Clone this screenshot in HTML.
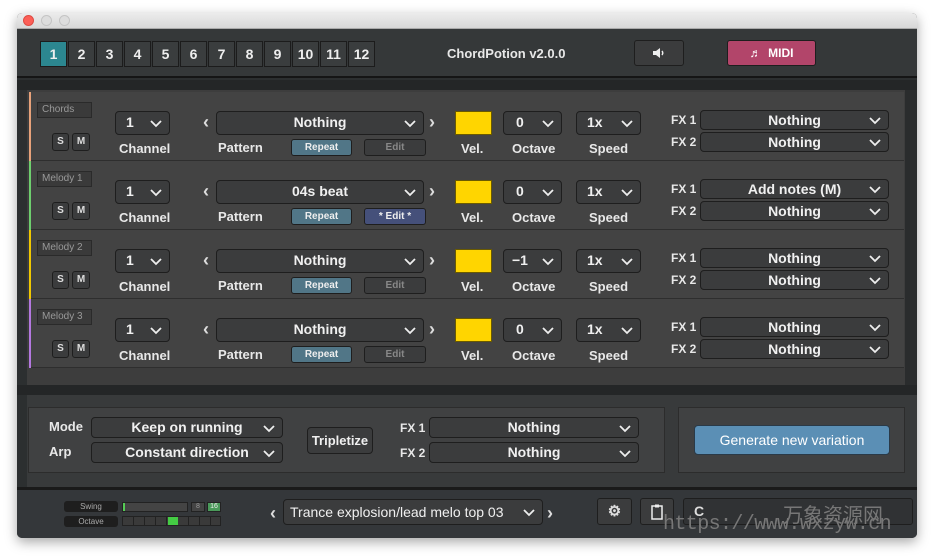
<!DOCTYPE html><html><head><meta charset="utf-8"><style>
*{box-sizing:border-box;margin:0;padding:0}
body{width:934px;height:560px;background:#fff;position:relative;overflow:hidden;font-family:"Liberation Sans","Noto Sans CJK SC",sans-serif;color:#eee}
.a{position:absolute}
.win{left:17px;top:13px;width:900px;height:525px;background:#2c2f30;border-radius:5px;box-shadow:0 4px 12px rgba(0,0,0,.35);overflow:hidden}
.tb{left:0;top:0;width:900px;height:16px;background:linear-gradient(#ececec,#d8d8d8);border-bottom:1px solid #aaa}
.dot{width:11px;height:11px;border-radius:50%;top:2px;background:#ddd;border:1px solid #c4c4c4}
.dd{position:absolute;background:#3b3c3d;border:1px solid #1e1e1e;border-radius:4px;font-size:14px;font-weight:bold;color:#f0f0f0;line-height:21px;text-align:center}
.dd svg{position:absolute;right:7px;top:50%;margin-top:-4px}
.lbl{position:absolute;font-size:13px;font-weight:bold;color:#e8e8e8}
.btn{position:absolute;background:#3b3c3d;border:1px solid #1e1e1e;border-radius:3px;font-size:10px;font-weight:bold;text-align:center;color:#ddd}
.tab{position:absolute;top:28px;width:27px;height:26px;background:#3a3d3e;border:1px solid #1c1c1c;font-size:14px;font-weight:bold;line-height:24px;text-align:center}
.row{position:absolute;left:12px;width:875px;height:69px;background:#434343;border-bottom:1px solid #2e2e2e}
.bar{position:absolute;left:0;top:0;width:2px;height:69px}
.name{position:absolute;left:8px;top:10px;width:55px;height:16px;background:#3a3a3a;border:1px solid #2a2a2a;font-size:10px;color:#999;padding-left:4px;line-height:14px}
.ar{position:absolute;font-size:18px;font-weight:bold;color:#ddd}
.vel{position:absolute;width:37px;height:24px;background:#ffd500;border:1px solid #6a5a00}
</style></head><body>
<div class="a win">
<div class="a tb"></div>
<div class="a dot" style="left:6px;background:#fc5f57;border-color:#de4a42"></div>
<div class="a dot" style="left:24px"></div>
<div class="a dot" style="left:42px"></div>
<div class="a" style="left:0;top:16px;width:900px;height:49px;background:#353839;border-bottom:2px solid #151515"></div>
<div class="tab" style="left:23px;background:#2c8790">1</div>
<div class="tab" style="left:51px">2</div><div class="tab" style="left:79px">3</div><div class="tab" style="left:107px">4</div><div class="tab" style="left:135px">5</div><div class="tab" style="left:163px">6</div><div class="tab" style="left:191px">7</div><div class="tab" style="left:219px">8</div><div class="tab" style="left:247px">9</div><div class="tab" style="left:275px">10</div><div class="tab" style="left:303px">11</div><div class="tab" style="left:331px">12</div>
<div class="lbl" style="left:430px;top:33px;font-size:13px">ChordPotion v2.0.0</div>
<div class="btn" style="left:617px;top:27px;width:50px;height:26px"><svg width="14" height="14" viewBox="0 0 14 14" style="margin-top:5px"><path d="M1 5h3l4-3v10l-4-3H1z" fill="#eee"/><path d="M10 5q1.5 2 0 4" stroke="#eee" stroke-width="1.5" fill="none"/></svg></div>
<div class="btn" style="left:710px;top:27px;width:89px;height:26px;background:#b2456a;font-size:12px;line-height:24px;color:#fff">♬ &nbsp;MIDI</div>
<div class="a" style="left:0;top:67px;width:900px;height:10px;background:#242627"></div>
<div class="a" style="left:10px;top:77px;width:878px;height:295px;background:#3d3d3d"></div>
<div class="a" style="left:888px;top:77px;width:12px;height:295px;background:#2a2c2d"></div>

<div class="row" style="top:79px"><div class="bar" style="background:#e8a27a"></div><div class="name">Chords</div></div>
<div class="row" style="top:148px"><div class="bar" style="background:#6ecf6e"></div><div class="name">Melody 1</div></div>
<div class="row" style="top:217px"><div class="bar" style="background:#f0c800"></div><div class="name">Melody 2</div></div>
<div class="row" style="top:286px"><div class="bar" style="background:#b478e0"></div><div class="name">Melody 3</div></div>

<svg width="0" height="0" style="position:absolute"><defs><path id="cv" d="M1 2l5 5 5-5" stroke="#eee" stroke-width="1.8" fill="none"/></defs></svg>

<!-- Row 1 -->
<div class="btn" style="left:35px;top:120px;width:17px;height:18px;line-height:16px">S</div><div class="btn" style="left:55px;top:120px;width:18px;height:18px;line-height:16px">M</div>
<div class="dd" style="left:98px;top:98px;width:55px;height:24px;text-align:left;padding-left:10px">1<svg width="12" height="9"><use href="#cv"/></svg></div>
<div class="lbl" style="left:102px;top:128px">Channel</div>
<div class="ar" style="left:186px;top:99px">‹</div><div class="ar" style="left:412px;top:99px">›</div>
<div class="dd" style="left:199px;top:98px;width:208px;height:24px">Nothing<svg width="12" height="9"><use href="#cv"/></svg></div>
<div class="lbl" style="left:201px;top:127px">Pattern</div>
<div class="btn" style="left:274px;top:126px;width:61px;height:17px;line-height:15px;background:#517687;color:#eee">Repeat</div>
<div class="btn" style="left:347px;top:126px;width:62px;height:17px;line-height:15px;color:#888">Edit</div>
<div class="vel" style="left:438px;top:98px"></div><div class="lbl" style="left:444px;top:128px">Vel.</div>
<div class="dd" style="left:486px;top:98px;width:59px;height:24px;text-align:left;padding-left:12px">0<svg width="12" height="9"><use href="#cv"/></svg></div><div class="lbl" style="left:495px;top:128px">Octave</div>
<div class="dd" style="left:559px;top:98px;width:65px;height:24px;text-align:left;padding-left:10px">1x<svg width="12" height="9"><use href="#cv"/></svg></div><div class="lbl" style="left:572px;top:128px">Speed</div>
<div class="lbl" style="left:654px;top:100px;font-size:12px">FX 1</div><div class="lbl" style="left:654px;top:122px;font-size:12px">FX 2</div>
<div class="dd" style="left:683px;top:97px;width:189px;height:20px;line-height:18px">Nothing<svg width="12" height="9"><use href="#cv"/></svg></div>
<div class="dd" style="left:683px;top:119px;width:189px;height:20px;line-height:18px">Nothing<svg width="12" height="9"><use href="#cv"/></svg></div>

<!-- Row 2 -->
<div class="btn" style="left:35px;top:189px;width:17px;height:18px;line-height:16px">S</div><div class="btn" style="left:55px;top:189px;width:18px;height:18px;line-height:16px">M</div>
<div class="dd" style="left:98px;top:167px;width:55px;height:24px;text-align:left;padding-left:10px">1<svg width="12" height="9"><use href="#cv"/></svg></div>
<div class="lbl" style="left:102px;top:197px">Channel</div>
<div class="ar" style="left:186px;top:168px">‹</div><div class="ar" style="left:412px;top:168px">›</div>
<div class="dd" style="left:199px;top:167px;width:208px;height:24px">04s beat<svg width="12" height="9"><use href="#cv"/></svg></div>
<div class="lbl" style="left:201px;top:196px">Pattern</div>
<div class="btn" style="left:274px;top:195px;width:61px;height:17px;line-height:15px;background:#517687;color:#eee">Repeat</div>
<div class="btn" style="left:347px;top:195px;width:62px;height:17px;line-height:15px;background:#45507a;color:#eee">* Edit *</div>
<div class="vel" style="left:438px;top:167px"></div><div class="lbl" style="left:444px;top:197px">Vel.</div>
<div class="dd" style="left:486px;top:167px;width:59px;height:24px;text-align:left;padding-left:12px">0<svg width="12" height="9"><use href="#cv"/></svg></div><div class="lbl" style="left:495px;top:197px">Octave</div>
<div class="dd" style="left:559px;top:167px;width:65px;height:24px;text-align:left;padding-left:10px">1x<svg width="12" height="9"><use href="#cv"/></svg></div><div class="lbl" style="left:572px;top:197px">Speed</div>
<div class="lbl" style="left:654px;top:169px;font-size:12px">FX 1</div><div class="lbl" style="left:654px;top:191px;font-size:12px">FX 2</div>
<div class="dd" style="left:683px;top:166px;width:189px;height:20px;line-height:18px">Add notes (M)<svg width="12" height="9"><use href="#cv"/></svg></div>
<div class="dd" style="left:683px;top:188px;width:189px;height:20px;line-height:18px">Nothing<svg width="12" height="9"><use href="#cv"/></svg></div>

<!-- Row 3 -->
<div class="btn" style="left:35px;top:258px;width:17px;height:18px;line-height:16px">S</div><div class="btn" style="left:55px;top:258px;width:18px;height:18px;line-height:16px">M</div>
<div class="dd" style="left:98px;top:236px;width:55px;height:24px;text-align:left;padding-left:10px">1<svg width="12" height="9"><use href="#cv"/></svg></div>
<div class="lbl" style="left:102px;top:266px">Channel</div>
<div class="ar" style="left:186px;top:237px">‹</div><div class="ar" style="left:412px;top:237px">›</div>
<div class="dd" style="left:199px;top:236px;width:208px;height:24px">Nothing<svg width="12" height="9"><use href="#cv"/></svg></div>
<div class="lbl" style="left:201px;top:265px">Pattern</div>
<div class="btn" style="left:274px;top:264px;width:61px;height:17px;line-height:15px;background:#517687;color:#eee">Repeat</div>
<div class="btn" style="left:347px;top:264px;width:62px;height:17px;line-height:15px;color:#888">Edit</div>
<div class="vel" style="left:438px;top:236px"></div><div class="lbl" style="left:444px;top:266px">Vel.</div>
<div class="dd" style="left:486px;top:236px;width:59px;height:24px;text-align:left;padding-left:8px">−1<svg width="12" height="9"><use href="#cv"/></svg></div><div class="lbl" style="left:495px;top:266px">Octave</div>
<div class="dd" style="left:559px;top:236px;width:65px;height:24px;text-align:left;padding-left:10px">1x<svg width="12" height="9"><use href="#cv"/></svg></div><div class="lbl" style="left:572px;top:266px">Speed</div>
<div class="lbl" style="left:654px;top:238px;font-size:12px">FX 1</div><div class="lbl" style="left:654px;top:260px;font-size:12px">FX 2</div>
<div class="dd" style="left:683px;top:235px;width:189px;height:20px;line-height:18px">Nothing<svg width="12" height="9"><use href="#cv"/></svg></div>
<div class="dd" style="left:683px;top:257px;width:189px;height:20px;line-height:18px">Nothing<svg width="12" height="9"><use href="#cv"/></svg></div>

<!-- Row 4 -->
<div class="btn" style="left:35px;top:327px;width:17px;height:18px;line-height:16px">S</div><div class="btn" style="left:55px;top:327px;width:18px;height:18px;line-height:16px">M</div>
<div class="dd" style="left:98px;top:305px;width:55px;height:24px;text-align:left;padding-left:10px">1<svg width="12" height="9"><use href="#cv"/></svg></div>
<div class="lbl" style="left:102px;top:335px">Channel</div>
<div class="ar" style="left:186px;top:306px">‹</div><div class="ar" style="left:412px;top:306px">›</div>
<div class="dd" style="left:199px;top:305px;width:208px;height:24px">Nothing<svg width="12" height="9"><use href="#cv"/></svg></div>
<div class="lbl" style="left:201px;top:334px">Pattern</div>
<div class="btn" style="left:274px;top:333px;width:61px;height:17px;line-height:15px;background:#517687;color:#eee">Repeat</div>
<div class="btn" style="left:347px;top:333px;width:62px;height:17px;line-height:15px;color:#888">Edit</div>
<div class="vel" style="left:438px;top:305px"></div><div class="lbl" style="left:444px;top:335px">Vel.</div>
<div class="dd" style="left:486px;top:305px;width:59px;height:24px;text-align:left;padding-left:12px">0<svg width="12" height="9"><use href="#cv"/></svg></div><div class="lbl" style="left:495px;top:335px">Octave</div>
<div class="dd" style="left:559px;top:305px;width:65px;height:24px;text-align:left;padding-left:10px">1x<svg width="12" height="9"><use href="#cv"/></svg></div><div class="lbl" style="left:572px;top:335px">Speed</div>
<div class="lbl" style="left:654px;top:307px;font-size:12px">FX 1</div><div class="lbl" style="left:654px;top:329px;font-size:12px">FX 2</div>
<div class="dd" style="left:683px;top:304px;width:189px;height:20px;line-height:18px">Nothing<svg width="12" height="9"><use href="#cv"/></svg></div>
<div class="dd" style="left:683px;top:326px;width:189px;height:20px;line-height:18px">Nothing<svg width="12" height="9"><use href="#cv"/></svg></div>

<!-- bottom section -->
<div class="a" style="left:0;top:372px;width:900px;height:10px;background:#242627"></div>
<div class="a" style="left:10px;top:382px;width:890px;height:92px;background:#383a3b"></div>
<div class="a" style="left:11px;top:394px;width:637px;height:66px;background:#404142;border:1px solid #2c2c2c"></div>
<div class="a" style="left:661px;top:394px;width:227px;height:66px;background:#404142;border:1px solid #2c2c2c"></div>
<div class="lbl" style="left:32px;top:406px">Mode</div><div class="lbl" style="left:32px;top:431px">Arp</div>
<div class="dd" style="left:74px;top:404px;width:192px;height:21px;line-height:19px">Keep on running<svg width="12" height="9"><use href="#cv"/></svg></div>
<div class="dd" style="left:74px;top:429px;width:192px;height:21px;line-height:19px">Constant direction<svg width="12" height="9"><use href="#cv"/></svg></div>
<div class="dd" style="left:290px;top:414px;width:66px;height:27px;line-height:25px;font-size:13px">Tripletize</div>
<div class="lbl" style="left:383px;top:408px;font-size:12px">FX 1</div><div class="lbl" style="left:383px;top:433px;font-size:12px">FX 2</div>
<div class="dd" style="left:412px;top:404px;width:210px;height:21px;line-height:19px">Nothing<svg width="12" height="9"><use href="#cv"/></svg></div>
<div class="dd" style="left:412px;top:429px;width:210px;height:21px;line-height:19px">Nothing<svg width="12" height="9"><use href="#cv"/></svg></div>
<div class="dd" style="left:677px;top:412px;width:196px;height:30px;line-height:28px;background:#5b8fb5;font-weight:normal;color:#fff;border-color:#2a3a48">Generate new variation</div>

<!-- footer -->
<div class="a" style="left:0;top:474px;width:900px;height:3px;background:#1a1a1a"></div>
<div class="a" style="left:0;top:477px;width:900px;height:48px;background:#34373a"></div>
<div class="a" style="left:47px;top:488px;width:54px;height:11px;background:#1e1e1e;border-radius:3px;font-size:8px;color:#aaa;text-align:center;line-height:11px">Swing</div>
<div class="a" style="left:47px;top:503px;width:54px;height:11px;background:#1e1e1e;border-radius:3px;font-size:8px;color:#aaa;text-align:center;line-height:11px">Octave</div>
<div class="a" style="left:105px;top:489px;width:66px;height:10px;background:#444;border:1px solid #222"><div style="width:2px;height:8px;background:#5c5"></div></div>
<div class="a" style="left:174px;top:489px;width:14px;height:10px;background:#444;border:1px solid #222;font-size:7px;text-align:center;color:#999">8</div>
<div class="a" style="left:190px;top:489px;width:14px;height:10px;background:#4a9a5a;border:1px solid #222;font-size:7px;text-align:center;color:#eee">16</div>
<div class="a" style="left:105px;top:503px;width:99px;height:10px;background:repeating-linear-gradient(90deg,#3a3a3a 0 10px,#222 10px 11px);border:1px solid #222"><div style="position:absolute;left:45px;top:0;width:10px;height:8px;background:#4c4"></div></div>
<div class="ar" style="left:253px;top:490px">‹</div><div class="ar" style="left:530px;top:490px">›</div>
<div class="dd" style="left:266px;top:486px;width:260px;height:26px;line-height:24px;font-weight:normal;font-size:14px;text-align:left;padding-left:6px">Trance explosion/lead melo top 03<svg width="12" height="9"><use href="#cv"/></svg></div>
<div class="btn" style="left:580px;top:485px;width:35px;height:27px;font-size:15px;line-height:25px">⚙</div>
<div class="btn" style="left:623px;top:485px;width:34px;height:27px"><svg width="12" height="16" viewBox="0 0 12 16" style="margin-top:5px"><rect x="1" y="2" width="10" height="13" fill="none" stroke="#eee" stroke-width="1.5"/><rect x="4" y="0.5" width="4" height="3" fill="#eee"/></svg></div>
<div class="btn" style="left:666px;top:485px;width:230px;height:27px;background:#303234;text-align:left;padding-left:10px;font-size:14px;line-height:25px">C</div>
<div class="a" style="left:766px;top:486px;font-size:20px;color:#777">万象资源网</div>
<div class="a" style="left:646px;top:500px;font-size:20px;color:#777;font-family:'Liberation Mono',monospace;letter-spacing:-0.6px">https://www.wxzyw.cn</div>
</div>
</body></html>
